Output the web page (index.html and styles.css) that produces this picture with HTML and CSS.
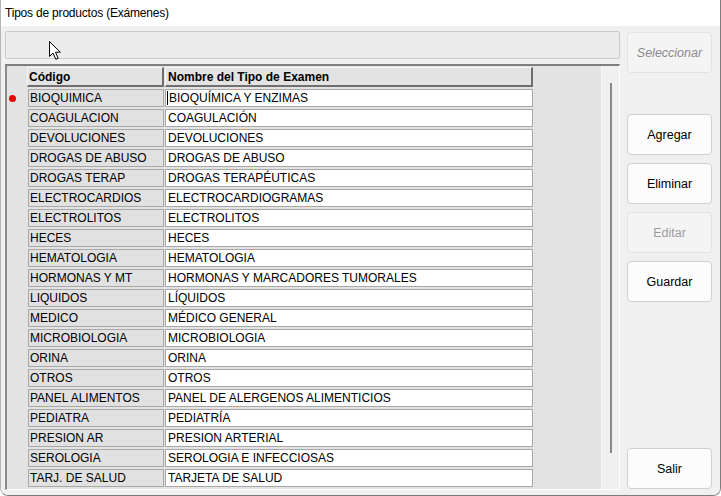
FILE: index.html
```html
<!DOCTYPE html>
<html lang="es">
<head>
<meta charset="utf-8">
<title>Tipos de productos (Exámenes)</title>
<link rel="stylesheet" href="styles.css">
</head>
<body>
<div class="window">
  <div class="titlebar">Tipos de productos (Exámenes)</div>
  <div class="content">
    <div class="left">
      <div class="panel"></div>
      <div class="grid">
        <div class="grid-main">
          <div class="row header">
            <div class="ind"></div>
            <div class="cell code hcell">Código</div>
            <div class="cell name hcell">Nombre del Tipo de Examen</div>
          </div>
          <div class="row">
            <div class="ind"><span class="dot"></span></div>
            <div class="cell code">BIOQUIMICA</div>
            <div class="cell name"><span class="caret"></span>BIOQUÍMICA Y ENZIMAS</div>
          </div>
          <div class="row"><div class="ind"></div><div class="cell code">COAGULACION</div><div class="cell name">COAGULACIÓN</div></div>
          <div class="row"><div class="ind"></div><div class="cell code">DEVOLUCIONES</div><div class="cell name">DEVOLUCIONES</div></div>
          <div class="row"><div class="ind"></div><div class="cell code">DROGAS DE ABUSO</div><div class="cell name">DROGAS DE ABUSO</div></div>
          <div class="row"><div class="ind"></div><div class="cell code">DROGAS TERAP</div><div class="cell name">DROGAS TERAPÉUTICAS</div></div>
          <div class="row"><div class="ind"></div><div class="cell code">ELECTROCARDIOS</div><div class="cell name">ELECTROCARDIOGRAMAS</div></div>
          <div class="row"><div class="ind"></div><div class="cell code">ELECTROLITOS</div><div class="cell name">ELECTROLITOS</div></div>
          <div class="row"><div class="ind"></div><div class="cell code">HECES</div><div class="cell name">HECES</div></div>
          <div class="row"><div class="ind"></div><div class="cell code">HEMATOLOGIA</div><div class="cell name">HEMATOLOGIA</div></div>
          <div class="row"><div class="ind"></div><div class="cell code">HORMONAS Y MT</div><div class="cell name">HORMONAS Y MARCADORES TUMORALES</div></div>
          <div class="row"><div class="ind"></div><div class="cell code">LIQUIDOS</div><div class="cell name">LÍQUIDOS</div></div>
          <div class="row"><div class="ind"></div><div class="cell code">MEDICO</div><div class="cell name">MÉDICO GENERAL</div></div>
          <div class="row"><div class="ind"></div><div class="cell code">MICROBIOLOGIA</div><div class="cell name">MICROBIOLOGIA</div></div>
          <div class="row"><div class="ind"></div><div class="cell code">ORINA</div><div class="cell name">ORINA</div></div>
          <div class="row"><div class="ind"></div><div class="cell code">OTROS</div><div class="cell name">OTROS</div></div>
          <div class="row"><div class="ind"></div><div class="cell code">PANEL ALIMENTOS</div><div class="cell name">PANEL DE ALERGENOS ALIMENTICIOS</div></div>
          <div class="row"><div class="ind"></div><div class="cell code">PEDIATRA</div><div class="cell name">PEDIATRÍA</div></div>
          <div class="row"><div class="ind"></div><div class="cell code">PRESION AR</div><div class="cell name">PRESION ARTERIAL</div></div>
          <div class="row"><div class="ind"></div><div class="cell code">SEROLOGIA</div><div class="cell name">SEROLOGIA E INFECCIOSAS</div></div>
          <div class="row"><div class="ind"></div><div class="cell code">TARJ. DE SALUD</div><div class="cell name">TARJETA DE SALUD</div></div>
        </div>
        <div class="scrollbar"><div class="thumb"></div></div>
      </div>
    </div>
    <div class="right">
      <div class="btn disabled italic">Seleccionar</div>
      <div class="btn first">Agregar</div>
      <div class="btn">Eliminar</div>
      <div class="btn disabled">Editar</div>
      <div class="btn">Guardar</div>
      <div class="btn last">Salir</div>
    </div>
  </div>
  <svg class="cursor" width="14" height="21" viewBox="0 0 14 21">
    <path d="M1.5 1.5 L1.5 16.5 L5 13 L7.8 19.3 L10.2 18.3 L7.5 12.2 L12.3 12.2 Z" fill="#fff" stroke="#000" stroke-width="1" stroke-linejoin="miter"/>
  </svg>
</div>
</body>
</html>
```
FILE: styles.css
```css
html, body {
  margin: 0;
  padding: 0;
  background: #ffffff;
}

.window {
  position: relative;
  width: 721px;
  height: 496px;
  box-sizing: border-box;
  display: flex;
  flex-direction: column;
  border-left: 1px solid #b4b4b4;
  border-right: 1px solid #7c7c7c;
  border-bottom: 1px solid #7c7c7c;
  border-radius: 0 0 8px 8px;
  overflow: hidden;
  font-family: "Liberation Sans", Arial, sans-serif;
}

.titlebar {
  height: 26px;
  line-height: 26px;
  padding-left: 4px;
  background: #ffffff;
  font-size: 12px;
  letter-spacing: -0.2px;
  color: #000;
}

.content {
  flex: 1;
  display: flex;
  background: #f0f0f0;
  padding: 5px 7px 5px 4px;
}

.left {
  width: 615px;
  display: flex;
  flex-direction: column;
  gap: 5px;
}

.panel {
  height: 28px;
  box-sizing: border-box;
  border: 1px solid #cacaca;
  border-radius: 2px;
  background: #ececec;
}

.grid {
  flex: 1;
  display: flex;
  box-sizing: border-box;
  border-top: 2px solid #7f7f7f;
  border-left: 2px solid #8a8a8a;
  border-right: 1px solid #ffffff;
  border-bottom: 1px solid #ffffff;
}

.grid-main {
  flex: 1;
  background: #e3e3e3;
  display: flex;
  flex-direction: column;
  gap: 2px;
  padding-top: 1px;
}

.row {
  display: flex;
  height: 18px;
}

.row.header {
  height: 20px;
}

.ind {
  width: 21px;
  display: flex;
  align-items: center;
  padding-left: 2px;
  box-sizing: border-box;
}

.dot {
  width: 7px;
  height: 7px;
  border-radius: 50%;
  background: #e80000;
}

.cell {
  box-sizing: border-box;
  height: 100%;
  border: 1px solid #a8a8a8;
  font-size: 12px;
  line-height: 16px;
  color: #000;
  white-space: nowrap;
  overflow: hidden;
  display: flex;
  align-items: center;
}

.code {
  width: 136px;
  margin-right: 1px;
  padding-left: 1px;
  background: #e1e1e1;
}

.name {
  width: 368px;
  padding-left: 2px;
  background: #ffffff;
}

.hcell {
  font-weight: bold;
  background: #e3e3e3;
  border-top: 1px solid #f8f8f8;
  border-left: 1px solid #f8f8f8;
  border-right: 2px solid #6f6f6f;
  border-bottom: 2px solid #6f6f6f;
}

.code.hcell {
  width: 137px;
  margin-left: -1px;
}

.caret {
  display: inline-block;
  width: 1px;
  height: 14px;
  background: #000;
  margin-left: -1px;
  margin-right: 1px;
}

.scrollbar {
  width: 18px;
  background: #f0f0f0;
  border-left: 1px solid #f7f7f7;
  box-sizing: border-box;
  display: flex;
  justify-content: center;
}

.thumb {
  width: 2px;
  height: 370px;
  margin-top: 17px;
  margin-left: 1px;
  background: #8a8a8a;
}

.right {
  width: 85px;
  margin-left: 7px;
  display: flex;
  flex-direction: column;
  padding-top: 1px;
  gap: 8px;
}

.btn {
  height: 41px;
  box-sizing: border-box;
  border: 1px solid #d0d0d0;
  border-radius: 4px;
  background: #fcfcfc;
  display: flex;
  align-items: center;
  justify-content: center;
  font-size: 12.5px;
  color: #000;
}

.btn.disabled {
  background: #f4f4f4;
  border-color: #e3e3e3;
  color: #9c9c9c;
}

.btn.italic {
  font-style: italic;
  color: #8a8a8a;
}

.btn.first {
  margin-top: 33px;
}

.btn.last {
  margin-top: auto;
  margin-bottom: 1px;
}

.cursor {
  position: absolute;
  left: 47px;
  top: 40px;
}
```
